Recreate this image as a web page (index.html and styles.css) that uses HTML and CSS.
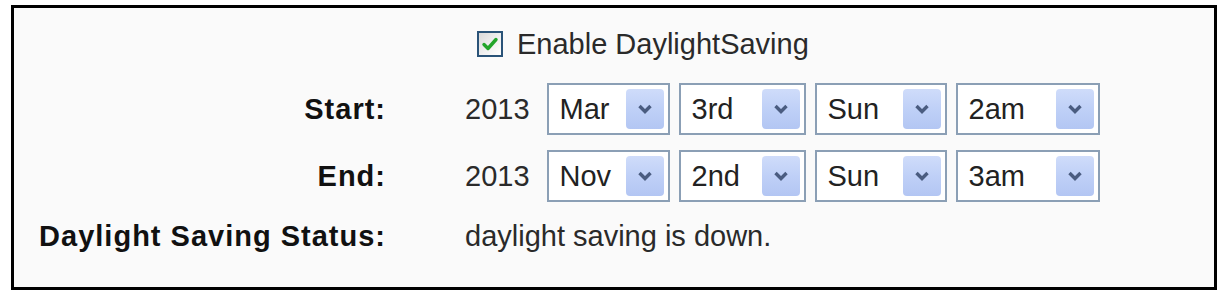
FILE: index.html
```html
<!DOCTYPE html>
<html>
<head>
<meta charset="utf-8">
<link rel="stylesheet" href="styles.css">
</head>
<body>
<div class="panel">
  <div class="row enable-row">
    <div class="label"></div>
    <div class="value">
      <span class="cb"><svg viewBox="0 0 20 20" width="20" height="20"><path d="M4 10.5 L8 14.5 L16 5.5" fill="none" stroke="#22a52a" stroke-width="3.4" stroke-linecap="round" stroke-linejoin="round"/></svg></span>
      <span class="enable-text">Enable DaylightSaving</span>
    </div>
  </div>
  <div class="row sel-row">
    <div class="label">Start:</div>
    <div class="value">
      <span class="year">2013</span>
      <div class="sel w-mon"><span class="sel-text">Mar</span><span class="btn"><svg viewBox="0 0 16 12" width="16" height="12"><path d="M2.5 3 L8 8.5 L13.5 3" fill="none" stroke="#4a5c80" stroke-width="3.4"/></svg></span></div>
      <div class="sel w-wk"><span class="sel-text">3rd</span><span class="btn"><svg viewBox="0 0 16 12" width="16" height="12"><path d="M2.5 3 L8 8.5 L13.5 3" fill="none" stroke="#4a5c80" stroke-width="3.4"/></svg></span></div>
      <div class="sel w-day"><span class="sel-text">Sun</span><span class="btn"><svg viewBox="0 0 16 12" width="16" height="12"><path d="M2.5 3 L8 8.5 L13.5 3" fill="none" stroke="#4a5c80" stroke-width="3.4"/></svg></span></div>
      <div class="sel w-hr"><span class="sel-text">2am</span><span class="btn"><svg viewBox="0 0 16 12" width="16" height="12"><path d="M2.5 3 L8 8.5 L13.5 3" fill="none" stroke="#4a5c80" stroke-width="3.4"/></svg></span></div>
    </div>
  </div>
  <div class="row sel-row">
    <div class="label">End:</div>
    <div class="value">
      <span class="year">2013</span>
      <div class="sel w-mon"><span class="sel-text">Nov</span><span class="btn"><svg viewBox="0 0 16 12" width="16" height="12"><path d="M2.5 3 L8 8.5 L13.5 3" fill="none" stroke="#4a5c80" stroke-width="3.4"/></svg></span></div>
      <div class="sel w-wk"><span class="sel-text">2nd</span><span class="btn"><svg viewBox="0 0 16 12" width="16" height="12"><path d="M2.5 3 L8 8.5 L13.5 3" fill="none" stroke="#4a5c80" stroke-width="3.4"/></svg></span></div>
      <div class="sel w-day"><span class="sel-text">Sun</span><span class="btn"><svg viewBox="0 0 16 12" width="16" height="12"><path d="M2.5 3 L8 8.5 L13.5 3" fill="none" stroke="#4a5c80" stroke-width="3.4"/></svg></span></div>
      <div class="sel w-hr"><span class="sel-text">3am</span><span class="btn"><svg viewBox="0 0 16 12" width="16" height="12"><path d="M2.5 3 L8 8.5 L13.5 3" fill="none" stroke="#4a5c80" stroke-width="3.4"/></svg></span></div>
    </div>
  </div>
  <div class="row status-row">
    <div class="label">Daylight Saving Status:</div>
    <div class="value"><span class="status">daylight saving is down.</span></div>
  </div>
</div>
</body>
</html>
```
FILE: styles.css
```css
html, body {
  margin: 0;
  padding: 0;
  background: #ffffff;
}
body {
  font-family: "Liberation Sans", Arial, sans-serif;
  font-size: 29px;
  color: #2a2a2a;
}
.panel {
  margin: 5px 0 0 11px;
  width: 1200px;
  height: 279px;
  border: 3px solid #000;
  background: #fafafa;
  box-sizing: content-box;
  display: flex;
  flex-direction: column;
}
.row {
  display: flex;
  align-items: center;
}
.label {
  width: 372px;
  flex: 0 0 372px;
  text-align: right;
  font-weight: bold;
  color: #111;
  letter-spacing: 1px;
}
.value {
  display: flex;
  align-items: center;
  padding-left: 79px;
}
.enable-row {
  height: 26px;
  margin-top: 23px;
}
.enable-row .value {
  padding-left: 91px;
}
.cb {
  box-sizing: border-box;
  width: 26px;
  height: 26px;
  border: 2px solid #2a5378;
  background: linear-gradient(135deg, #dadada 0%, #f2f2f2 60%, #ffffff 100%);
  display: flex;
  align-items: center;
  justify-content: center;
  margin-right: 14px;
}
.cb svg {
  display: block;
}
.sel-row {
  height: 52px;
}
.sel-row:nth-child(2) {
  margin-top: 26px;
}
.sel-row:nth-child(3) {
  margin-top: 15px;
}
.year {
  margin-right: 17px;
}
.sel {
  box-sizing: border-box;
  height: 52px;
  border: 2px solid #8b9fb5;
  background: #fff;
  display: flex;
  align-items: center;
  justify-content: space-between;
  padding: 0 4px 0 11px;
  margin-right: 9px;
}
.w-mon { width: 123px; }
.w-wk { width: 127px; }
.w-day { width: 132px; }
.w-hr { width: 144px; }
.sel-text {
  color: #222;
}
.btn {
  width: 38px;
  height: 40px;
  border-radius: 4px;
  background: linear-gradient(180deg, #cfdcfa 0%, #bfd0f7 50%, #b3c6f3 100%);
  display: flex;
  align-items: center;
  justify-content: center;
}
.btn svg {
  display: block;
}
.status-row {
  margin-top: 14px;
  height: 40px;
}
.status {
  color: #2a2a2a;
}
```
